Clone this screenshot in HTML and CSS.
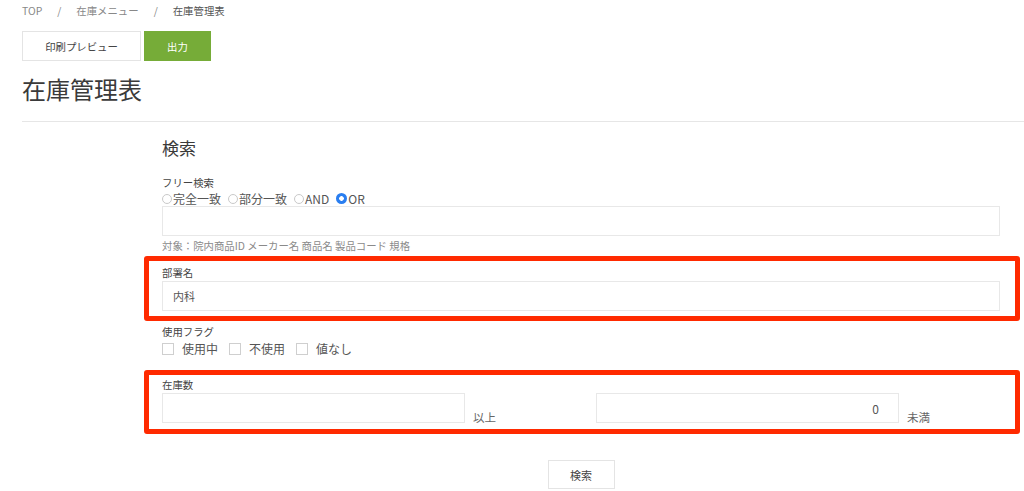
FILE: index.html
```html
<!DOCTYPE html>
<html lang="ja">
<head>
<meta charset="utf-8">
<title>在庫管理表</title>
<link rel="stylesheet" href="styles.css">
</head>
<body>
<div class="page">
  <nav class="breadcrumb">
    <span>TOP</span><span class="sep">/</span><span>在庫メニュー</span><span class="sep">/</span><span class="current">在庫管理表</span>
  </nav>
  <div class="actions">
    <button class="btn btn-print">印刷プレビュー</button>
    <button class="btn btn-output">出力</button>
  </div>
  <h1 class="title">在庫管理表</h1>
  <div class="rule"></div>

  <form class="search">
    <h2 class="search-title">検索</h2>

    <div class="group group-free">
      <div class="field-label">フリー検索</div>
      <div class="radio-row">
        <label class="opt"><input type="radio" name="mode" class="radio">完全一致</label>
        <label class="opt"><input type="radio" name="mode" class="radio">部分一致</label>
        <label class="opt"><input type="radio" name="mode" class="radio">AND</label>
        <label class="opt"><input type="radio" name="mode" class="radio" checked>OR</label>
      </div>
      <input type="text" class="text-input">
      <div class="help">対象：院内商品ID メーカー名 商品名 製品コード 規格</div>
    </div>

    <div class="highlight hl-dept">
      <div class="field-label">部署名</div>
      <input type="text" class="text-input" value="内科">
    </div>

    <div class="group group-flag">
      <div class="field-label">使用フラグ</div>
      <div class="check-row">
        <label class="chk"><input type="checkbox" class="checkbox">使用中</label>
        <label class="chk"><input type="checkbox" class="checkbox">不使用</label>
        <label class="chk"><input type="checkbox" class="checkbox">値なし</label>
      </div>
    </div>

    <div class="highlight hl-stock">
      <div class="field-label">在庫数</div>
      <div class="range-row">
        <div class="range-cell">
          <input type="text" class="text-input range-input">
          <span class="unit">以上</span>
        </div>
        <div class="range-cell">
          <input type="text" class="text-input range-input num" value="0">
          <span class="unit">未満</span>
        </div>
      </div>
    </div>

    <button type="button" class="btn btn-search">検索</button>
  </form>
</div>
</body>
</html>
```

FILE: styles.css
```css
html, body {
  margin: 0;
  padding: 0;
  background: #fff;
}

body {
  font-family: "Noto Sans CJK JP", "Noto Sans", sans-serif;
  color: #333;
}

.page {
  padding: 3px 0 0 22px;
}

.breadcrumb {
  font-size: 10.4px;
  line-height: 16px;
  color: #888;
  white-space: nowrap;
}

.breadcrumb .sep {
  margin: 0 15px;
}

.breadcrumb .current {
  color: #555;
}

.actions {
  display: flex;
  gap: 3px;
  margin-top: 12px;
}

.btn {
  box-sizing: border-box;
  height: 30px;
  border: 1px solid #e4e4e4;
  background: #fff;
  font-family: inherit;
  font-size: 10.4px;
  color: #444;
  padding: 0;
  cursor: pointer;
}

.btn-print {
  width: 119px;
}

.btn-output {
  width: 67px;
  background: #76ac38;
  border-color: #76ac38;
  color: #fff;
}

.title {
  margin: 10px 0 0;
  font-size: 24px;
  line-height: 36px;
  font-weight: 400;
  color: #3a3a3a;
}

.rule {
  margin-top: 14px;
  border-top: 1px solid #e6e6e6;
}

.search {
  margin-left: 140px;
  width: 838px;
}

.search-title {
  margin: 14px 0 0;
  font-size: 17px;
  line-height: 24px;
  font-weight: 400;
  color: #3a3a3a;
}

.field-label {
  font-size: 10.4px;
  line-height: 15px;
  color: #444;
}

.group-free {
  margin-top: 15px;
}

.radio-row {
  display: flex;
  align-items: center;
  height: 15px;
  margin-top: 1px;
  font-size: 12px;
  color: #555;
}

.opt {
  display: inline-flex;
  align-items: center;
  margin-right: 7px;
  white-space: nowrap;
}

.radio {
  appearance: none;
  -webkit-appearance: none;
  box-sizing: border-box;
  width: 10px;
  height: 10px;
  margin: 0 1px 0 0;
  border: 1px solid #c9c9c9;
  border-radius: 50%;
  background: #fff;
}

.radio:checked {
  width: 11px;
  height: 11px;
  border: none;
  background: radial-gradient(circle, #fff 0 2px, #2a7ef0 2.6px);
}

.text-input {
  display: block;
  box-sizing: border-box;
  width: 100%;
  height: 30px;
  margin: 0;
  padding: 0 9px;
  border: 1px solid #e8e8e8;
  background: #fff;
  font-family: inherit;
  font-size: 11px;
  color: #555;
  outline: none;
}

.help {
  margin-top: 2px;
  font-size: 10.4px;
  line-height: 15px;
  color: #8a8a8a;
}

.highlight {
  margin: 0 -20px 0 -18px;
  padding: 4px 15px 5px 13px;
  border: 5px solid #ff2a00;
  border-radius: 3px;
}

.highlight .field-label {
  margin-bottom: 1px;
}

.hl-dept {
  margin-top: 3px;
}

.hl-dept .text-input {
  padding-left: 10px;
}

.group-flag {
  margin-top: 2.5px;
}

.check-row {
  display: flex;
  align-items: center;
  height: 16px;
  margin-top: 2px;
  font-size: 12px;
  color: #555;
}

.chk {
  display: inline-flex;
  align-items: center;
  margin-right: 11px;
  white-space: nowrap;
}

.checkbox {
  appearance: none;
  -webkit-appearance: none;
  box-sizing: border-box;
  width: 12px;
  height: 12px;
  margin: 0 8px 0 0;
  border: 1px solid #cfcfcf;
  background: #fff;
  border-radius: 0;
}

.hl-stock {
  margin-top: 13.5px;
  padding-top: 2px;
  padding-bottom: 6px;
}

.range-row {
  display: grid;
  grid-template-columns: 434px 1fr;
}

.range-cell {
  display: flex;
  align-items: flex-end;
}

.range-input {
  width: 303px;
  flex: none;
}

.range-input.num {
  text-align: right;
  padding-right: 19px;
  font-size: 12px;
  color: #555;
}

.unit {
  margin-left: 8px;
  font-size: 11.5px;
  line-height: 12px;
  color: #666;
  white-space: nowrap;
}

.btn-search {
  display: block;
  width: 67px;
  height: 29px;
  margin: 26px auto 0;
  font-size: 11px;
  color: #444;
}
```
